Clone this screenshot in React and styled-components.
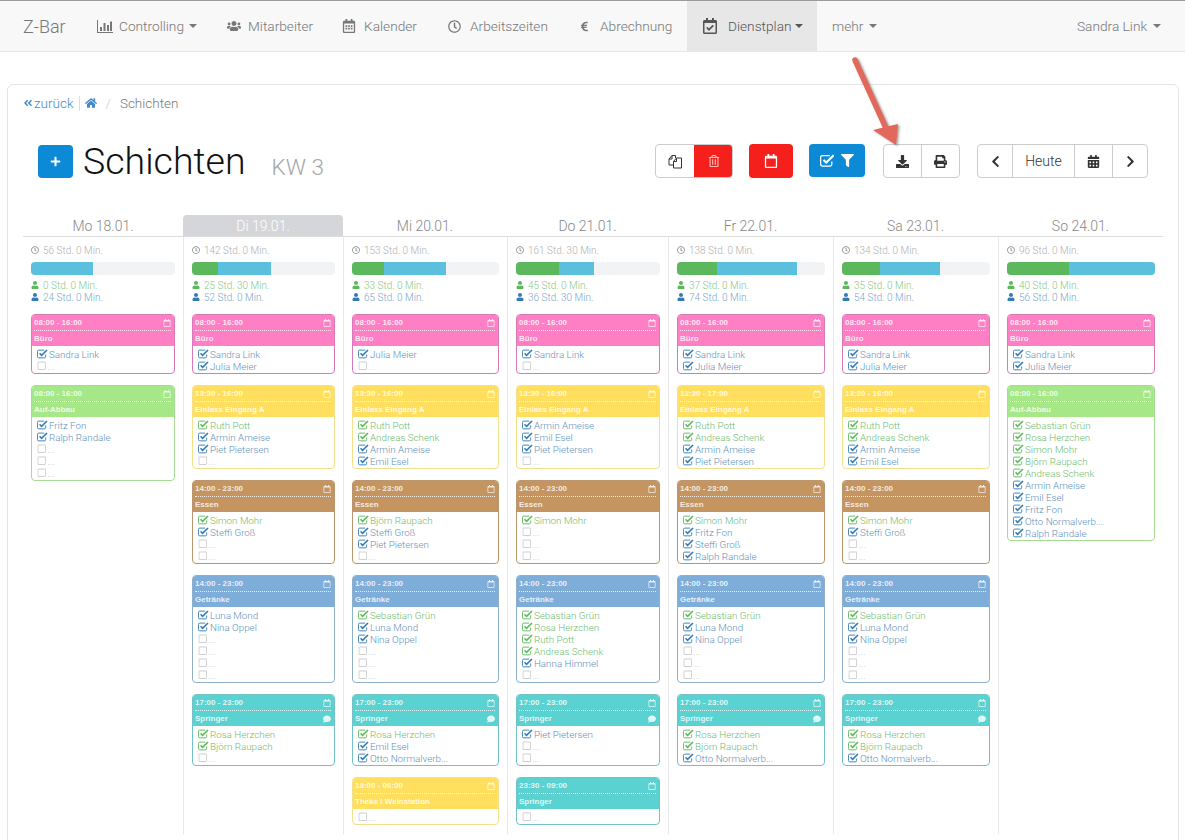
import React from "react";
import styled, { createGlobalStyle } from "styled-components";
import {
  FaUsers, FaRegCalendarAlt, FaRegClock, FaEuroSign, FaRegCalendarCheck, FaHome, FaPlus,
  FaRegTrashAlt, FaRegCalendar, FaFilter, FaDownload, FaPrint, FaAngleDoubleLeft,
  FaChevronLeft, FaChevronRight, FaUser, FaComment, FaRegSquare, FaCalendarAlt,
} from "react-icons/fa";

const Global = createGlobalStyle`
  html, body { margin: 0; padding: 0; background: #fff; height: 840px; overflow: hidden; }
  body { font-family: Roboto, "Liberation Sans", sans-serif; font-weight: 300; }
`;

const Page = styled.div`
  position: relative;
  height: 840px;
  overflow: hidden;
`;

const Navbar = styled.nav`
  display: flex;
  height: 52px;
  box-sizing: border-box;
  padding-left: 8px;
  background: #f8f8f8;
  border-top: 1px solid #9a9a9a;
  border-bottom: 1px solid #e7e7e7;
  color: #777;
  font-size: 13.7px;
`;

const Brand = styled.div`
  display: flex;
  align-items: center;
  width: 74px;
  box-sizing: border-box;
  padding-left: 15px;
  font-size: 18px;
`;

const NavItem = styled.div`
  display: flex;
  align-items: center;
  gap: ${(p) => p.$gap || 7}px;
  width: ${(p) => p.$w}px;
  box-sizing: border-box;
  padding-left: 15px;
  white-space: nowrap;
  background: ${(p) => (p.$active ? "#e7e7e7" : "transparent")};
  color: ${(p) => (p.$active ? "#555" : "#777")};
  margin-left: ${(p) => (p.$push ? "auto" : "0")};
  svg { font-size: ${(p) => p.$icon || 14}px; flex: none; }
`;

const Caret = styled.span`
  display: inline-block;
  width: 0;
  height: 0;
  margin-left: ${(p) => (p.$tight ? -7 : -1)}px;
  border-top: 4px solid currentColor;
  border-left: 4px solid transparent;
  border-right: 4px solid transparent;
`;

const Panel = styled.div`
  margin: 32px 6px 0 7px;
  padding: 9px 15px 0;
  min-height: 800px;
  border: 1px solid #e4e4e4;
  border-radius: 6px;
  box-sizing: border-box;
`;

const Crumbs = styled.div`
  display: flex;
  align-items: center;
  height: 18px;
  font-size: 13.5px;
  color: #777;
`;

const BackLink = styled.span`
  display: flex;
  align-items: center;
  gap: 1px;
  color: #428bca;
  padding-right: 5px;
  border-right: 1px solid #ddd;
  margin-right: 5px;
  line-height: 15px;
  svg { font-size: 10px; }
`;

const HomeLink = styled.span`
  display: flex;
  color: #428bca;
  font-size: 12px;
`;

const Slash = styled.span`
  color: #ccc;
  margin: 0 9px;
`;

const Heading = styled.div`
  display: flex;
  align-items: center;
  margin-top: 32px;
  padding: 0 15px;
  height: 34px;
`;

const AddButton = styled.div`
  display: flex;
  align-items: center;
  justify-content: center;
  width: 35px;
  height: 33px;
  border-radius: 4px;
  background: #0d8ad6;
  color: #fff;
  font-size: 11px;
`;

const Title = styled.h1`
  margin: 0 0 0 10px;
  font-size: 37.5px;
  font-weight: 300;
  color: #111;
  line-height: 34px;
`;

const Week = styled.span`
  margin: 12px 0 0 26px;
  font-size: 22.5px;
  color: #a5a5a5;
`;

const Tools = styled.div`
  display: flex;
  margin-left: auto;
`;

const Group = styled.div`
  display: flex;
  height: 34px;
  margin-left: ${(p) => p.$gap || 0}px;
  box-sizing: border-box;
  border: 1px solid #ccc;
  border-radius: 4px;
  overflow: hidden;
  background: #fff;
`;

const ToolButton = styled.div`
  display: flex;
  align-items: center;
  justify-content: center;
  width: ${(p) => p.$w}px;
  box-sizing: border-box;
  border-left: ${(p) => (p.$sep ? "1px solid #ccc" : "none")};
  color: #333;
  font-size: ${(p) => p.$size || 13}px;
  font-weight: ${(p) => (p.$size ? 300 : 400)};
`;

const SolidButton = styled.div`
  display: flex;
  align-items: center;
  justify-content: center;
  gap: ${(p) => p.$spread || 0}px;
  width: ${(p) => p.$w}px;
  height: ${(p) => p.$h || 33}px;
  margin-left: ${(p) => p.$gap || 0}px;
  border-radius: 4px;
  background: ${(p) => p.$bg};
  color: #fff;
  font-size: ${(p) => p.$size || 13}px;
`;

// sitzt am rechten ende der gruppe und deckt deren rahmen ab
const TrashButton = styled.div`
  display: flex;
  align-items: center;
  justify-content: center;
  width: 39px;
  margin: -1px -1px -1px 0;
  background: #f5201c;
  color: rgba(255, 255, 255, 0.7);
  font-size: 12px;
`;

const Days = styled.div`
  display: grid;
  grid-template-columns: 160px 160px 164px 161px 165px 165px 165px;
  margin-top: 37px;
  width: 1140px;
`;

const Day = styled.div`
  display: flex;
  flex-direction: column;
`;

const DayHead = styled.div`
  height: 22px;
  box-sizing: border-box;
  text-align: center;
  font-size: 14px;
  line-height: 22px;
  color: ${(p) => (p.$today ? "#fff" : "#888")};
  background: ${(p) => (p.$today ? "#d5d6d9" : "transparent")};
  border-bottom: 1px solid #ddd;
  border-radius: 4px 4px 0 0;
`;

const DayBody = styled.div`
  flex: 1;
  padding: 7px 8px 9px;
  border-left: ${(p) => (p.$first ? "none" : "1px solid #e8e8e8")};
`;

const Stat = styled.div`
  display: flex;
  align-items: center;
  gap: 4px;
  height: 12px;
  font-size: 10px;
  color: ${(p) => p.$color};
  white-space: nowrap;
  svg { font-size: 8px; color: ${(p) => p.$icon || p.$color}; flex: none; }
`;

const Bar = styled.div`
  display: flex;
  height: 13px;
  margin: 6px 0 4px;
  border-radius: 4px;
  overflow: hidden;
  background: #f2f3f4;
`;

const BarPart = styled.div`
  background: ${(p) => p.$color};
`;

const Shifts = styled.div`
  display: flex;
  flex-direction: column;
  gap: 11px;
  margin-top: 11px;
`;

const Card = styled.div`
  border: 1px solid ${(p) => p.$line};
  border-radius: 4px;
  overflow: hidden;
  background: #fff;
  padding-bottom: 1px;
`;

const CardHead = styled.div`
  height: 31px;
  margin-bottom: 2px;
  padding: 0 3px 0 2px;
  background: ${(p) => p.$bg};
  color: rgba(255, 255, 255, 0.82);
  font-family: "Liberation Sans", sans-serif;
  font-size: 8px;
  font-weight: 700;
`;

const HeadRow = styled.div`
  display: flex;
  align-items: center;
  justify-content: space-between;
  height: ${(p) => p.$h}px;
  border-bottom: ${(p) => (p.$dotted ? "1px dotted rgba(255,255,255,.8)" : "none")};
  svg { font-size: 8px; }
`;

const Person = styled.div`
  display: flex;
  align-items: center;
  gap: 1px;
  height: 12px;
  padding-left: 5px;
  font-size: 9.8px;
  white-space: nowrap;
  color: ${(p) => p.$color};
  svg { flex: none; color: ${(p) => p.$icon}; font-size: 9.5px; }
`;

const Pointer = styled.svg`
  position: absolute;
  left: 845px;
  top: 52px;
  width: 70px;
  height: 110px;
`;

const tones = {
  pink: ["#fe7fc4", "#d77ab8"],
  green: ["#a6e888", "#a5dc94"],
  yellow: ["#ffdf5d", "#f4e08a"],
  brown: ["#c49560", "#b9966e"],
  blue: ["#7fadd9", "#8fb0cc"],
  teal: ["#5ad2d2", "#74c2c8"],
};

// festangestellte stehen blau, aushilfen gruen
const helpers = new Set([
  "Ruth Pott", "Andreas Schenk", "Simon Mohr", "Björn Raupach", "Sebastian Grün", "Rosa Herzchen",
]);

const buero = (...p) => ({ time: "08:00 - 16:00", title: "Büro", tone: "pink", people: p });
const abbau = (...p) => ({ time: "08:00 - 16:00", title: "Auf-Abbau", tone: "green", people: p });
const einlass = (time, ...p) => ({ time, title: "Einlass Eingang A", tone: "yellow", people: p });
const essen = (...p) => ({ time: "14:00 - 23:00", title: "Essen", tone: "brown", people: p });
const getraenke = (...p) => ({ time: "14:00 - 23:00", title: "Getränke", tone: "blue", people: p });
const springer = (...p) => ({ time: "17:00 - 23:00", title: "Springer", tone: "teal", note: true, people: p });

const days = [
  {
    label: "Mo 18.01.", total: "56 Std. 0 Min.", a: "0 Std. 0 Min.", b: "24 Std. 0 Min.", bar: [0, 43],
    shifts: [
      buero("Sandra Link", ""),
      abbau("Fritz Fon", "Ralph Randale", "", "", ""),
    ],
  },
  {
    label: "Di 19.01.", today: true, total: "142 Std. 0 Min.", a: "25 Std. 30 Min.", b: "52 Std. 0 Min.", bar: [18.2, 37],
    shifts: [
      buero("Sandra Link", "Julia Meier"),
      einlass("13:30 - 16:00", "Ruth Pott", "Armin Ameise", "Piet Pietersen", ""),
      essen("Simon Mohr", "Steffi Groß", "", ""),
      getraenke("Luna Mond", "Nina Oppel", "", "", "", ""),
      springer("Rosa Herzchen", "Björn Raupach", ""),
    ],
  },
  {
    label: "Mi 20.01.", total: "153 Std. 0 Min.", a: "33 Std. 0 Min.", b: "65 Std. 0 Min.", bar: [21.8, 42.2],
    shifts: [
      buero("Julia Meier", ""),
      einlass("13:30 - 16:00", "Ruth Pott", "Andreas Schenk", "Armin Ameise", "Emil Esel"),
      essen("Björn Raupach", "Steffi Groß", "Piet Pietersen", ""),
      getraenke("Sebastian Grün", "Luna Mond", "Nina Oppel", "", "", ""),
      springer("Rosa Herzchen", "Emil Esel", "Otto Normalverb..."),
      { time: "18:00 - 06:00", title: "Theke I Weinstation", tone: "yellow", people: [""] },
    ],
  },
  {
    label: "Do 21.01.", total: "161 Std. 30 Min.", a: "45 Std. 0 Min.", b: "36 Std. 30 Min.", bar: [29.9, 24.3],
    shifts: [
      buero("Sandra Link", ""),
      einlass("13:30 - 16:00", "Armin Ameise", "Emil Esel", "Piet Pietersen", ""),
      essen("Simon Mohr", "", "", ""),
      getraenke("Sebastian Grün", "Rosa Herzchen", "Ruth Pott", "Andreas Schenk", "Hanna Himmel", ""),
      springer("Piet Pietersen", "", ""),
      { time: "23:30 - 09:00", title: "Springer", tone: "teal", people: [""] },
    ],
  },
  {
    label: "Fr 22.01.", total: "138 Std. 0 Min.", a: "37 Std. 0 Min.", b: "74 Std. 0 Min.", bar: [27, 54],
    shifts: [
      buero("Sandra Link", "Julia Meier"),
      einlass("13:30 - 17:00", "Ruth Pott", "Andreas Schenk", "Armin Ameise", "Piet Pietersen"),
      essen("Simon Mohr", "Fritz Fon", "Steffi Groß", "Ralph Randale"),
      getraenke("Sebastian Grün", "Luna Mond", "Nina Oppel", "", "", ""),
      springer("Rosa Herzchen", "Björn Raupach", "Otto Normalverb..."),
    ],
  },
  {
    label: "Sa 23.01.", total: "134 Std. 0 Min.", a: "35 Std. 0 Min.", b: "54 Std. 0 Min.", bar: [25.7, 40.5],
    shifts: [
      buero("Sandra Link", "Julia Meier"),
      einlass("13:30 - 16:00", "Ruth Pott", "Andreas Schenk", "Armin Ameise", "Emil Esel"),
      essen("Simon Mohr", "Steffi Groß", "", ""),
      getraenke("Sebastian Grün", "Luna Mond", "Nina Oppel", "", "", ""),
      springer("Rosa Herzchen", "Björn Raupach", "Otto Normalverb..."),
    ],
  },
  {
    label: "So 24.01.", total: "96 Std. 0 Min.", a: "40 Std. 0 Min.", b: "56 Std. 0 Min.", bar: [41.9, 58.1],
    shifts: [
      buero("Sandra Link", "Julia Meier"),
      abbau(
        "Sebastian Grün", "Rosa Herzchen", "Simon Mohr", "Björn Raupach", "Andreas Schenk",
        "Armin Ameise", "Emil Esel", "Fritz Fon", "Otto Normalverb...", "Ralph Randale"
      ),
    ],
  },
];

const BarsIcon = () => (
  <svg width="16" height="13" viewBox="0 0 16 13" fill="currentColor">
    <path d="M0 0h1v12h15v1H0z" />
    <path d="M3 7h2v4H3zM6.500 3h2v8h-2zM10 5h2v6h-2zM13 1.500h2V11h-2z" />
  </svg>
);

const CheckIcon = () => (
  <svg width="1.15em" height="1em" viewBox="0 0 12 10.400" fill="none" stroke="currentColor">
    <path d="M9.500 6v2.300a1.400 1.400 0 0 1-1.400 1.400H1.900A1.400 1.400 0 0 1 .5 8.300V2.600a1.400 1.400 0 0 1 1.400-1.400h6" strokeWidth="1" />
    <path d="M2.800 4.700 5 6.900 11 1" strokeWidth="1.700" />
  </svg>
);

const FilesIcon = () => (
  <svg width="14" height="15" viewBox="0 0 14 15" fill="none" stroke="currentColor" strokeWidth="1">
    <path d="M5 11H1V5l3-3.500h3.500V4" />
    <path d="M4 1.500V5H1" />
    <path d="M5.500 14V7.500L8.500 4h5v10z" />
    <path d="M8.500 4v3.500h-3" />
  </svg>
);

const Slot = ({ name }) => {
  if (!name) {
    return (
      <Person $color="#c4c4c4" $icon="#d0d0d0">
        <FaRegSquare />
        {" ..."}
      </Person>
    );
  }
  const helper = helpers.has(name);
  return (
    <Person $color={helper ? "#6fbb6f" : "#5f90ba"} $icon={helper ? "#5cb85c" : "#337ab7"}>
      <CheckIcon />
      {name}
    </Person>
  );
};

const Shift = ({ time, title, tone, note, people }) => (
  <Card $line={tones[tone][1]}>
    <CardHead $bg={tones[tone][0]}>
      <HeadRow $h={15} $dotted>
        {time}
        <FaRegCalendar />
      </HeadRow>
      <HeadRow $h={15}>
        {title}
        {note && <FaComment />}
      </HeadRow>
    </CardHead>
    {people.map((name, i) => (
      <Slot key={i} name={name} />
    ))}
  </Card>
);

const App = () => (
  <Page>
    <Global />
    <Navbar>
      <Brand>Z-Bar</Brand>
      <NavItem $w={130} $gap={6}><BarsIcon />Controlling <Caret /></NavItem>
      <NavItem $w={115}><FaUsers />Mitarbeiter</NavItem>
      <NavItem $w={106} $gap={8}><FaRegCalendarAlt />Kalender</NavItem>
      <NavItem $w={131} $gap={9} $icon={13}><FaRegClock />Arbeitszeiten</NavItem>
      <NavItem $w={123} $gap={10} $icon={11}><FaEuroSign />Abrechnung</NavItem>
      <NavItem $w={130} $gap={10} $icon={16} $active><FaRegCalendarCheck />Dienstplan <Caret $tight /></NavItem>
      <NavItem $w={70}>mehr <Caret /></NavItem>
      <NavItem $w={123} $push>Sandra Link <Caret /></NavItem>
    </Navbar>
    <Panel>
      <Crumbs>
        <BackLink><FaAngleDoubleLeft />zurück</BackLink>
        <HomeLink><FaHome /></HomeLink>
        <Slash>/</Slash>
        Schichten
      </Crumbs>
      <Heading>
        <AddButton><FaPlus /></AddButton>
        <Title>Schichten</Title>
        <Week>KW 3</Week>
        <Tools>
          <Group>
            <ToolButton $w={38}><FilesIcon /></ToolButton>
            <TrashButton><FaRegTrashAlt /></TrashButton>
          </Group>
          <SolidButton $w={44} $h={34} $gap={16} $size={14} $bg="#f5201c"><FaRegCalendar /></SolidButton>
          <SolidButton $w={56} $gap={16} $spread={7} $bg="#0d8ad6"><CheckIcon /><FaFilter /></SolidButton>
          <Group $gap={18}>
            <ToolButton $w={37}><FaDownload /></ToolButton>
            <ToolButton $w={38} $sep><FaPrint /></ToolButton>
          </Group>
          <Group $gap={17}>
            <ToolButton $w={34}><FaChevronLeft /></ToolButton>
            <ToolButton $w={62} $sep $size={14}>Heute</ToolButton>
            <ToolButton $w={38} $sep><FaCalendarAlt /></ToolButton>
            <ToolButton $w={35} $sep><FaChevronRight /></ToolButton>
          </Group>
        </Tools>
      </Heading>
      <Days>
        {days.map((d, i) => (
          <Day key={d.label}>
            <DayHead $today={d.today}>{d.label}</DayHead>
            <DayBody $first={i === 0}>
              <Stat $color="#b0b0b0" $icon="#888"><FaRegClock />{d.total}</Stat>
              <Bar>
                <BarPart $color="#5cb85c" style={{ width: `${d.bar[0]}%` }} />
                <BarPart $color="#5bc0de" style={{ width: `${d.bar[1]}%` }} />
              </Bar>
              <Stat $color="#86c786" $icon="#5cb85c"><FaUser />{d.a}</Stat>
              <Stat $color="#7ba6cc" $icon="#337ab7"><FaUser />{d.b}</Stat>
              <Shifts>
                {d.shifts.map((s, j) => (
                  <Shift key={j} {...s} />
                ))}
              </Shifts>
            </DayBody>
          </Day>
        ))}
      </Days>
    </Panel>
    <Pointer viewBox="0 0 70 110">
      <defs>
        <filter id="drop" x="-20%" y="-20%" width="150%" height="150%">
          <feDropShadow dx="1.500" dy="1" stdDeviation="1" floodColor="#555" floodOpacity="0.6" />
        </filter>
      </defs>
      <g filter="url(#drop)" fill="#e2685c">
        <path d="M10 8 L41 76" stroke="#e2685c" strokeWidth="5.500" strokeLinecap="round" fill="none" />
        <path d="M51 93 L28 78 L53 72 Z" />
      </g>
    </Pointer>
  </Page>
);

export default App;
